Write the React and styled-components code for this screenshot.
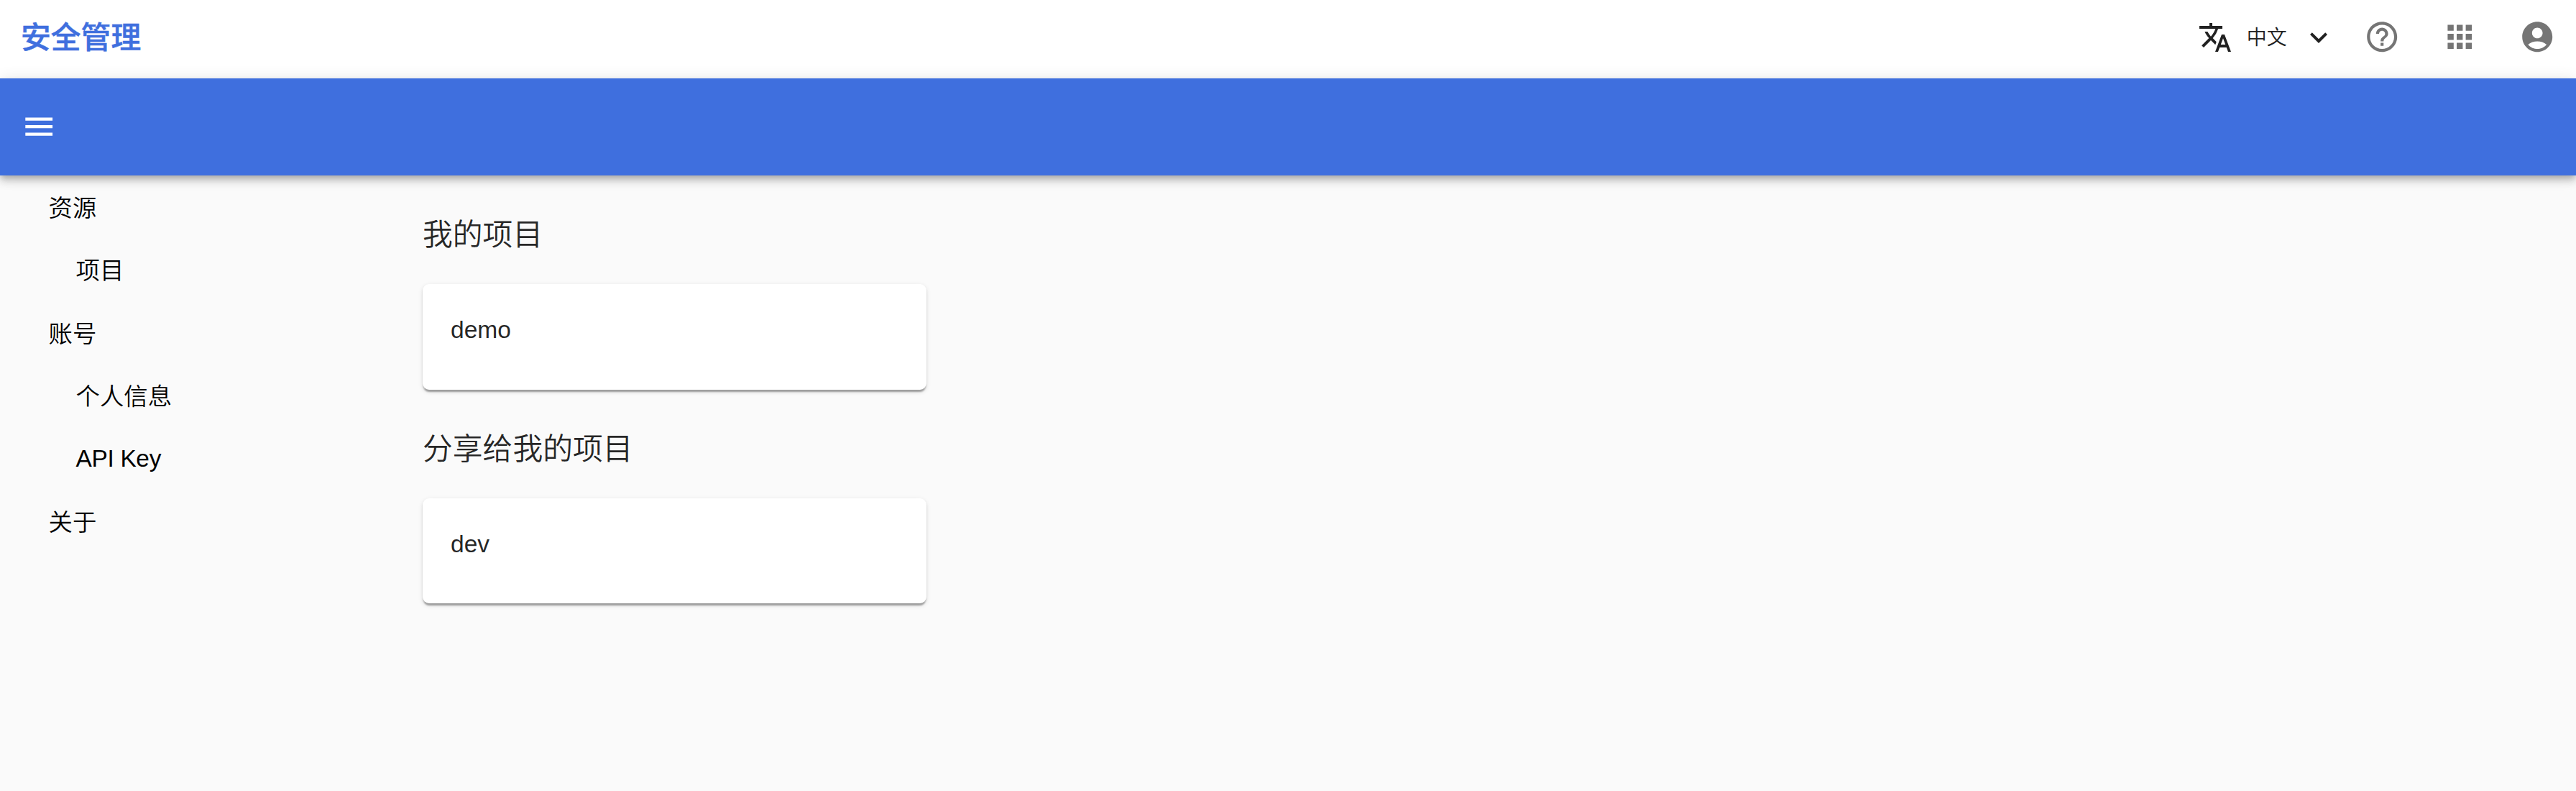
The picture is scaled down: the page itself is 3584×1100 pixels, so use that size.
import React from "react";
import styled, { createGlobalStyle } from "styled-components";
import {
  MdTranslate,
  MdKeyboardArrowDown,
  MdHelpOutline,
  MdApps,
  MdAccountCircle,
  MdMenu,
} from "react-icons/md";

const GlobalStyle = createGlobalStyle`
  * { box-sizing: border-box; }
  body {
    margin: 0;
    background: #fafafa;
    color: rgba(0, 0, 0, 0.87);
    font-family: "Liberation Sans", "Noto Sans CJK SC", sans-serif;
    font-weight: 350;
  }
  h1, h2, p { margin: 0; padding: 0; font-weight: inherit; }
`;

const Page = styled.div`
  display: flex;
  flex-direction: column;
  height: 1100px;
  overflow: hidden;
`;

const Header = styled.header`
  display: flex;
  align-items: center;
  justify-content: space-between;
  height: 109px;
  padding: 0 29px 7px;
  background: #fff;
`;

const Brand = styled.h1`
  padding-top: 4px;
  color: #3f6fde;
  font-size: 41.8px;
  line-height: 60px;
  -webkit-text-stroke: 0.5px #3f6fde;
  && { font-weight: 500; }
`;

const Actions = styled.div`
  display: flex;
  align-items: center;
`;

const Language = styled.button`
  display: flex;
  align-items: center;
  margin: 2px 39px 0 0;
  padding: 0;
  border: 0;
  background: none;
  color: #212121;
  font: 350 28px/48px "Liberation Sans", "Noto Sans CJK SC", sans-serif;
  svg { width: 48px; height: 48px; }
`;

const LanguageName = styled.span`
  margin: 0 20px;
  padding-top: 1px;
`;

const IconRow = styled.div`
  display: flex;
  gap: 57.5px;
  color: #757575;
  svg { display: block; width: 50.4px; height: 50.4px; }
`;

const Toolbar = styled.div`
  position: relative;
  z-index: 1;
  display: flex;
  align-items: center;
  flex: none;
  height: 135px;
  padding-left: 29px;
  background: #3f6fde;
  color: #fff;
  box-shadow: 0 4.2px 8.4px -2.1px rgba(0, 0, 0, 0.2), 0 8.4px 10.5px rgba(0, 0, 0, 0.14),
    0 2.1px 21px rgba(0, 0, 0, 0.12);
  svg { width: 50.4px; height: 50.4px; }
`;

const Body = styled.div`
  display: flex;
  flex: 1;
`;

const Nav = styled.nav`
  width: 588px;
  flex: none;
`;

const NavItem = styled.p`
  height: 87.4px;
  padding-top: ${(p) => (p.$latin ? 0 : 2)}px;
  padding-left: ${(p) => (p.$nested ? 105.5 : 67.5)}px;
  color: #000;
  font-size: 33.4px;
  line-height: 87.4px;
  letter-spacing: ${(p) => (p.$latin ? "-0.3px" : "normal")};
`;

const Content = styled.main`
  padding-top: 51px;
`;

const Section = styled.section`
  height: 297.5px;
`;

const SectionTitle = styled.h2`
  height: 62px;
  margin-bottom: 38px;
  font-size: 41.8px;
  line-height: 64px;
`;

const Card = styled.div`
  width: 701px;
  height: 146.5px;
  padding: 39px;
  border-radius: 9px;
  background: #fff;
  font-size: 33.6px;
  line-height: 50px;
  box-shadow: 0 4.2px 2.1px -2.1px rgba(0, 0, 0, 0.2), 0 2.1px 2.1px rgba(0, 0, 0, 0.14),
    0 2.1px 6.3px rgba(0, 0, 0, 0.12);
`;

const navigation = [
  { label: "资源" },
  { label: "项目", nested: true },
  { label: "账号" },
  { label: "个人信息", nested: true },
  { label: "API Key", nested: true, latin: true },
  { label: "关于" },
];

const sections = [
  { title: "我的项目", project: "demo" },
  { title: "分享给我的项目", project: "dev" },
];

export default function App() {
  return (
    <Page>
      <GlobalStyle />
      <Header>
        <Brand>安全管理</Brand>
        <Actions>
          <Language>
            <MdTranslate />
            <LanguageName>中文</LanguageName>
            <MdKeyboardArrowDown />
          </Language>
          <IconRow>
            <MdHelpOutline />
            <MdApps />
            <MdAccountCircle />
          </IconRow>
        </Actions>
      </Header>
      <Toolbar>
        <MdMenu />
      </Toolbar>
      <Body>
        <Nav>
          {navigation.map((item) => (
            <NavItem key={item.label} $nested={item.nested} $latin={item.latin}>
              {item.label}
            </NavItem>
          ))}
        </Nav>
        <Content>
          {sections.map((section) => (
            <Section key={section.title}>
              <SectionTitle>{section.title}</SectionTitle>
              <Card>{section.project}</Card>
            </Section>
          ))}
        </Content>
      </Body>
    </Page>
  );
}
